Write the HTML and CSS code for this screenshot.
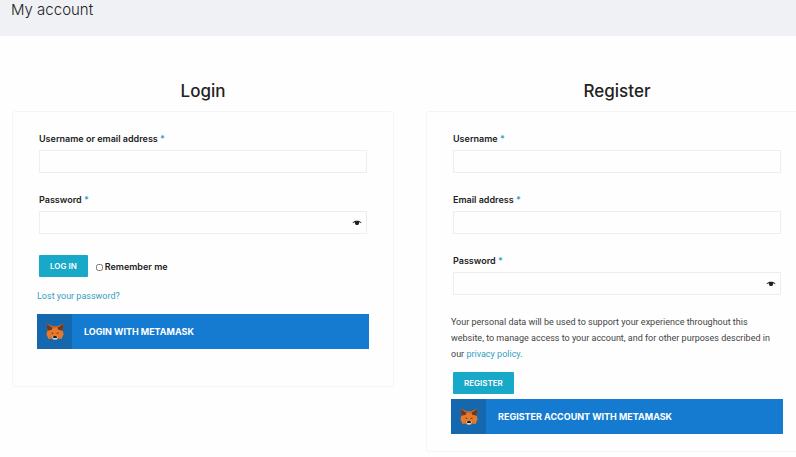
FILE: index.html
```html
<!DOCTYPE html>
<html lang="en">
<head>
<meta charset="UTF-8" />
<meta name="viewport" content="width=device-width, initial-scale=1" />
<title>My account</title>
<link rel="stylesheet" href="styles.css">
</head>
<body>
  <svg class="sprite" aria-hidden="true">
    <symbol id="icon-eye" viewBox="0 0 20 12">
      <path d="M1 5.500C4 2 7 1.500 10 1.500s6 .5 9 4l-1 1c-1.500-1-2.500-1.700-4-2A4.200 4.200 0 1 1 6 4.500c-1.500.3-2.500 1-4 2z" fill="#222"/>
    </symbol>
    <symbol id="icon-fox" viewBox="0 0 36 34">
      <path d="M1 1l13 6h8l13-6-2 14 2 8-4 9-8-2-2 3h-6l-2-3-8 2-4-9 2-8z" fill="#e8792b"/>
      <path d="M1 1l13 7-3 6-8 2-1-7zM35 1L22 8l3 6 8 2 1-7z" fill="#6b3a24"/>
      <path d="M1 1l13 6h8l13-6-12 9H13z" fill="#c9662e"/>
      <path d="M3 16l8-2-2 8-8 1zM33 16l-8-2 2 8 8 1z" fill="#e8792b"/>
      <path d="M11 19l4 1-1 2-3-1zM25 19l-4 1 1 2 3-1z" fill="#5a3a2a"/>
      <path d="M9 25l5 1 1 4-8 2zM27 25l-5 1-1 4 8 2z" fill="#d97330"/>
      <path d="M12 27h12l-2 6h-8z" fill="#d9d2cb"/>
      <path d="M15 26h6l1 4h-8z" fill="#1d1d1f"/>
    </symbol>
  </svg>

  <header class="page-header">
    <h1>My account</h1>
  </header>

  <main class="account">
    <section class="column">
      <h2>Login</h2>
      <form class="panel panel-login">
        <div class="field">
          <label for="login-user">Username or email address <span class="required">*</span></label>
          <input type="text" id="login-user" autocomplete="username">
        </div>
        <div class="field">
          <label for="login-password">Password <span class="required">*</span></label>
          <div class="password">
            <input type="password" id="login-password" autocomplete="current-password">
            <button type="button" class="toggle" aria-label="Show password"><svg><use href="#icon-eye"/></svg></button>
          </div>
        </div>
        <div class="actions">
          <button type="submit" class="btn">LOG IN</button>
          <label class="remember" for="remember"><input type="checkbox" id="remember">Remember me</label>
        </div>
        <p class="lost"><a href="#">Lost your password?</a></p>
        <button type="button" class="metamask">
          <span class="metamask-icon"><svg><use href="#icon-fox"/></svg></span>
          <span class="metamask-text">LOGIN WITH METAMASK</span>
        </button>
      </form>
    </section>

    <section class="column">
      <h2>Register</h2>
      <form class="panel">
        <div class="field">
          <label for="reg-user">Username <span class="required">*</span></label>
          <input type="text" id="reg-user" autocomplete="username">
        </div>
        <div class="field">
          <label for="reg-email">Email address <span class="required">*</span></label>
          <input type="email" id="reg-email" autocomplete="email">
        </div>
        <div class="field">
          <label for="reg-password">Password <span class="required">*</span></label>
          <div class="password">
            <input type="password" id="reg-password" autocomplete="new-password">
            <button type="button" class="toggle" aria-label="Show password"><svg><use href="#icon-eye"/></svg></button>
          </div>
        </div>
        <p class="privacy">Your personal data will be used to support your experience throughout this website, to manage access to your account, and for other purposes described in our <a href="#">privacy policy</a>.</p>
        <div class="actions actions-register">
          <button type="submit" class="btn">REGISTER</button>
        </div>
        <button type="button" class="metamask">
          <span class="metamask-icon"><svg><use href="#icon-fox"/></svg></span>
          <span class="metamask-text">REGISTER ACCOUNT WITH METAMASK</span>
        </button>
      </form>
    </section>
  </main>
</body>
</html>
```
FILE: styles.css
```css
* {
  box-sizing: border-box;
}

body {
  margin: 0;
  font-family: Roboto, "Liberation Sans", sans-serif;
  font-size: 9px;
  line-height: 16px;
  color: #444;
  background: #fefefe;
  overflow-x: hidden;
}

.sprite {
  display: none;
}

h1,
h2,
label {
  margin: 0;
  font-family: Inter, "Liberation Sans", sans-serif;
  color: #222;
}

.page-header {
  padding: 0 11px 16px;
  background: #f0f1f5;
}

h1 {
  font-size: 15px;
  line-height: 20px;
  font-weight: 300;
}

/* the right column runs slightly past the window edge */
.account {
  display: grid;
  grid-template-columns: repeat(auto-fit, minmax(300px, 1fr));
  gap: 32px;
  align-items: start;
  margin: 43px -12px 0 12px;
}

h2 {
  font-size: 17px;
  line-height: 24px;
  font-weight: 500;
  text-align: center;
  margin-bottom: 8px;
}

.panel {
  padding: 19px 24px 17px;
  border: 1px solid #f5f5f7;
  border-radius: 3px;
}

.panel-login {
  padding-bottom: 37px;
}

.field {
  display: flex;
  flex-direction: column;
  gap: 3px;
  margin: 0 2px 19px;
}

label {
  font-size: 9px;
  font-weight: 600;
  color: #222;
}

.required,
a {
  color: #359fc0;
}

a {
  text-decoration: none;
}

a:hover {
  text-decoration: underline;
}

.field input {
  display: block;
  width: 100%;
  height: 23px;
  padding: 0 8px;
  font: inherit;
  color: #333;
  background: #fefefe;
  border: 1px solid #eeeef0;
  border-radius: 0;
}

.password {
  position: relative;
}

.toggle {
  position: absolute;
  top: 0;
  right: 4px;
  display: flex;
  align-items: center;
  height: 24px;
  padding: 0 1px;
  background: none;
  border: none;
  cursor: pointer;
}

.toggle svg {
  width: 10px;
  height: 6px;
}

.actions {
  display: flex;
  align-items: center;
  gap: 8px;
  margin: 21px 2px 0;
}

.btn {
  height: 22px;
  padding: 0 11px;
  font: inherit;
  font-family: Inter, "Liberation Sans", sans-serif;
  font-size: 8px;
  font-weight: 600;
  color: #fff;
  background: #18a9c8;
  border: none;
  border-radius: 1px;
  cursor: pointer;
}

.btn:hover {
  background: #1494b0;
}

.remember {
  display: flex;
  align-items: center;
  gap: 2px;
  padding-top: 2px;
}

.remember input {
  width: 7px;
  height: 7px;
  margin: 0;
}

.lost {
  margin: 11px 0 10px;
}

.privacy {
  margin: 19px 0 10px;
  padding-right: 6px;
}

.actions-register {
  margin: 0 2px 5px;
}

.metamask {
  display: flex;
  align-items: center;
  width: 100%;
  height: 35px;
  padding: 0;
  font: inherit;
  font-family: Inter, "Liberation Sans", sans-serif;
  font-weight: 700;
  color: #fff;
  background: #147bd1;
  border: none;
  cursor: pointer;
}

.metamask:hover {
  background: #126fbd;
}

.metamask-icon {
  display: flex;
  align-items: center;
  justify-content: center;
  width: 35px;
  height: 35px;
  background: #1668ae;
}

.metamask-icon svg {
  width: 18px;
  height: 17px;
}

.metamask-text {
  padding-left: 12px;
}
```
